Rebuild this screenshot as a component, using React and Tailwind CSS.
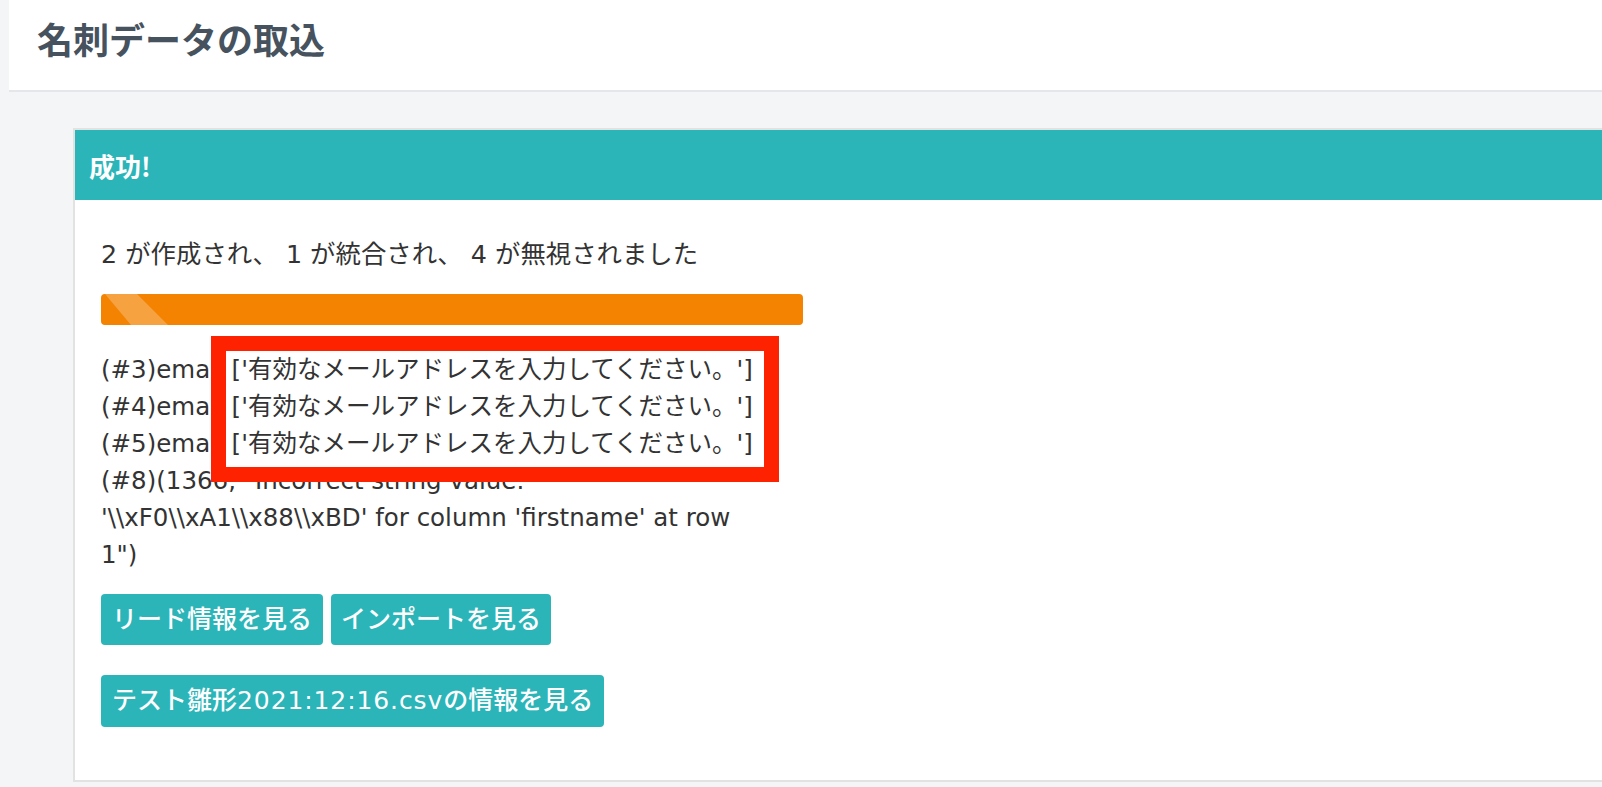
import React from "react";

const FONT = { fontFamily: '"DejaVu Sans", "Noto Sans CJK JP", sans-serif' };
const CJK = { fontFamily: '"Noto Sans CJK JP", sans-serif' };

const ERR8 = `(#8)(1366, "Incorrect string value: '\\\\xF0\\\\xA1\\\\x88\\\\xBD' for column 'firstname' at row 1")`;

export default function App() {
  return (
    <div className="relative min-h-screen overflow-hidden bg-[#f4f5f7]" style={FONT}>
      <header className="ml-[9px] h-[92px] border-b-2 border-[#e4e6ea] bg-white pl-[28px] pt-[17px]">
        <h1 className="text-[36px] leading-[43px] font-semibold text-[#46525e]" style={CJK}>
          名刺データの取込
        </h1>
      </header>

      <main className="pl-[73px] pt-[36px]">
        <div className="w-[1560px] border-2 border-[#e2e2e2] bg-white">
          <div className="flex h-[70px] items-center bg-[#2bb5b8] px-[14px]">
            <span className="text-[26px] font-bold text-white" style={CJK}>成功!</span>
          </div>
          <div className="pl-[26px] pt-[36px] pb-[53px] text-[#333333]">
            <div className="w-[702px]">
              <p className="text-[25.4px] leading-[37px]">2 が作成され、 1 が統合され、 4 が無視されました</p>

              <div className="relative mt-[21px] h-[31px] overflow-hidden rounded-[4px] bg-[#f38300]">
                <svg className="absolute left-0 top-0" width="80" height="31" viewBox="0 0 80 31">
                  <polygon points="4,0 36,0 67,31 30,31" fill="#ffffff" fillOpacity="0.25" />
                </svg>
              </div>

              <div className="mt-[26px] w-[660px] text-[24.5px] leading-[37px]">
                <div>(#3)email ['有効なメールアドレスを入力してください。']</div>
                <div>(#4)email ['有効なメールアドレスを入力してください。']</div>
                <div>(#5)email ['有効なメールアドレスを入力してください。']</div>
                <div>{ERR8}</div>
              </div>

              <div className="mt-[21px] flex gap-[8px]">
                <button className="h-[51px] rounded-[4px] bg-[#2bb5b8] px-[11px] text-[25px] font-medium text-white">
                  リード情報を見る
                </button>
                <button className="h-[51px] rounded-[4px] bg-[#2bb5b8] px-[10px] text-[25px] font-medium text-white">
                  インポートを見る
                </button>
              </div>
              <div className="mt-[30px] flex">
                <button className="h-[52px] rounded-[4px] bg-[#2bb5b8] px-[11px] text-[25px] font-medium text-white">
                  テスト雛形<span className="tracking-[0.9px]">2021:12:16.csv</span>の情報を見る
                </button>
              </div>
            </div>
          </div>
        </div>
      </main>

      <div className="pointer-events-none absolute left-[211px] top-[336px] h-[146px] w-[568px] border-[15px] border-[#ff2200]" />
    </div>
  );
}
